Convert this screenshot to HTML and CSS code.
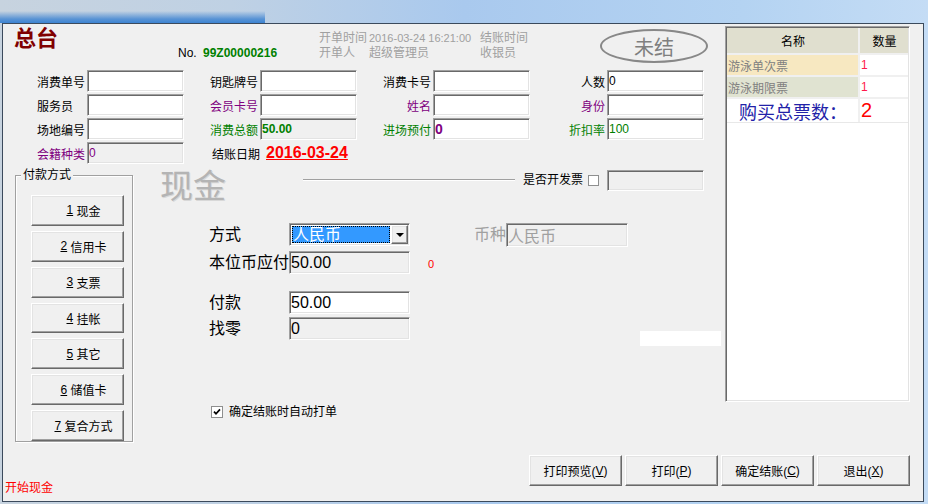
FILE: index.html
```html
<!DOCTYPE html>
<html lang="zh-CN">
<head>
  <meta charset="UTF-8">
  <title>总台 - 结账</title>
  <link rel="stylesheet" href="styles.css">
</head>
<body>
  <div class="desk">
    <div class="window">
      <div class="top">
        <div class="main">
          <div class="head">
            <div class="title">总台</div>
            <div class="no">No. <b>99Z00000216</b></div>
            <div class="info">
              <span>开单时间</span><span class="time">2016-03-24 16:21:00</span><span>结账时间</span>
              <span>开单人</span><span>超级管理员</span><span>收银员</span>
            </div>
            <div class="stamp">未结</div>
          </div>

          <div class="fields">
            <div class="lbl l">消费单号</div><div class="box"></div>
            <div class="lbl">钥匙牌号</div><div class="box"></div>
            <div class="lbl">消费卡号</div><div class="box"></div>
            <div class="lbl">人数</div><div class="box">0</div>

            <div class="lbl l">服务员</div><div class="box"></div>
            <div class="lbl purple">会员卡号</div><div class="box"></div>
            <div class="lbl purple">姓名</div><div class="box"></div>
            <div class="lbl purple">身份</div><div class="box"></div>

            <div class="lbl l">场地编号</div><div class="box"></div>
            <div class="lbl green">消费总额</div><div class="box off green strong">50.00</div>
            <div class="lbl green">进场预付</div><div class="box purple strong big-val">0</div>
            <div class="lbl green">折扣率</div><div class="box green">100</div>

            <div class="lbl l purple">会籍种类</div><div class="box off purple">0</div>
            <div class="lbl tight">结账日期</div><div class="date">2016-03-24</div>
          </div>

          <div class="pay">
            <div class="group">
              <span class="caption">付款方式</span>
              <div class="btn raised"><u>1</u>&nbsp;现金</div>
              <div class="btn raised"><u>2</u>&nbsp;信用卡</div>
              <div class="btn raised"><u>3</u>&nbsp;支票</div>
              <div class="btn raised"><u>4</u>&nbsp;挂帐</div>
              <div class="btn raised"><u>5</u>&nbsp;其它</div>
              <div class="btn raised"><u>6</u>&nbsp;储值卡</div>
              <div class="btn raised"><u>7</u>&nbsp;复合方式</div>
            </div>

            <div class="cash">
              <div class="cash-head">
                <div class="big">现金</div>
                <div class="rule"></div>
                <div class="q">是否开发票</div>
                <div class="chk"></div>
                <div class="box off inv"></div>
              </div>

              <div class="rows">
                <div class="row">
                  <div class="name">方式</div>
                  <div class="select">
                    <div class="sel-val">人民币</div>
                    <div class="drop raised"></div>
                  </div>
                  <div class="cur">币种</div>
                  <div class="box off cur-val">人民币</div>
                </div>
                <div class="row r2">
                  <div class="name">本位币应付</div>
                  <div class="box off">50.00</div>
                  <div class="diff">0</div>
                </div>
                <div class="row r3">
                  <div class="name">付款</div>
                  <div class="box">50.00</div>
                </div>
                <div class="row r4">
                  <div class="name">找零</div>
                  <div class="box off">0</div>
                  <div class="blank"></div>
                </div>
              </div>

              <div class="auto">
                <div class="chk on">
                  <svg width="8" height="8" viewBox="0 0 8 8"><path d="M1 3.6 L3 5.8 L7 1.4" stroke="#000" stroke-width="1.7" fill="none"/></svg>
                </div>
                <span>确定结账时自动打单</span>
              </div>
            </div>
          </div>
        </div>

        <div class="side">
          <div class="tr th"><div>名称</div><div>数量</div></div>
          <div class="tr t1"><div>游泳单次票</div><div>1</div></div>
          <div class="tr t2"><div>游泳期限票</div><div>1</div></div>
          <div class="tr sum"><div>购买总票数：</div><div>2</div></div>
        </div>
      </div>

      <div class="foot">
        <div class="status">开始现金</div>
        <div class="actions">
          <div class="btn raised">打印预览(<u>V</u>)</div>
          <div class="btn raised">打印(<u>P</u>)</div>
          <div class="btn raised">确定结账(<u>C</u>)</div>
          <div class="btn raised">退出(<u>X</u>)</div>
        </div>
      </div>
    </div>
  </div>
</body>
</html>
```

FILE: styles.css
```css
* {
  box-sizing: border-box;
}
body {
  margin: 0;
  width: 928px;
  height: 504px;
  overflow: hidden;
  font: 12px "Liberation Sans", "Noto Sans CJK SC", sans-serif;
  color: #000;
  background-color: #b5cfe9;
  background-image:
    linear-gradient(180deg, rgba(70, 136, 210, 0) 11px, rgba(70, 136, 210, .85) 19px, #3d84d2 23px),
    linear-gradient(90deg, #c7d3df 0, #bfd1e4 25%, #a9c9ee 50%, #b4d3f2 80%, #c4dcf5 100%);
  background-size: 265px 23px, 100% 100%;
  background-repeat: no-repeat;
}
.desk {
  padding: 23px 0 0 2px;
}
.window {
  width: 922px;
  height: 479px;
  border: 1px solid #3b4a5c;
  background: #f0f0f0;
  display: flex;
  flex-direction: column;
}

/* 3D borders */
.raised {
  background: #f0f0f0;
  border: 1px solid;
  border-color: #fff #696969 #696969 #fff;
  box-shadow: inset -1px -1px 0 #a0a0a0, inset 1px 1px 0 #e3e3e3;
}
.box {
  display: flex;
  align-items: center;
  padding: 0 1px;
  background: #fff;
  border: 1px solid;
  border-color: #a0a0a0 #fff #fff #a0a0a0;
  box-shadow: inset 1px 1px 0 #696969, inset -1px -1px 0 #e3e3e3;
  white-space: nowrap;
  overflow: hidden;
}
.box.off {
  background: #f0f0f0;
}

.top {
  display: flex;
  height: 425px;
}
.main {
  width: 722px;
  flex: none;
}

/* header */
.head {
  display: flex;
  align-items: flex-start;
  height: 46px;
}
.title {
  width: 164px;
  margin: 2px 0 0 11px;
  font-size: 22px;
  line-height: 26px;
  font-weight: bold;
  color: #800000;
}
.no {
  width: 141px;
  margin-top: 22px;
  line-height: 15px;
}
.no b {
  color: #008000;
  margin-left: 3px;
}
.info {
  width: 281px;
  margin-top: 7px;
  display: grid;
  grid-template-columns: 50px 111px auto;
  line-height: 15px;
  color: #a0a0a0;
}
.info .time {
  font-size: 11px;
}
.stamp {
  width: 108px;
  height: 34px;
  margin-top: 5px;
  border: 2px solid #888;
  border-radius: 50%;
  display: flex;
  align-items: center;
  justify-content: center;
  font-size: 20px;
  color: #7f7f7f;
}

/* field grid */
.fields {
  display: grid;
  grid-template-columns: 50px 97px 76px 97px 76px 97px 77px 97px;
  grid-auto-rows: 22px;
  row-gap: 2px;
  margin-left: 34px;
}
.lbl {
  display: flex;
  align-items: center;
  justify-content: flex-end;
  padding-right: 2px;
  white-space: nowrap;
}
.lbl.l {
  justify-content: flex-start;
}
.lbl.tight {
  padding-right: 0;
}
.purple {
  color: #800080;
}
.green {
  color: #008000;
}
.strong {
  font-weight: bold;
}
.big-val {
  font-size: 14px;
}
.date {
  grid-column: 4 / span 3;
  display: flex;
  align-items: center;
  padding-left: 6px;
  font-size: 16px;
  font-weight: bold;
  color: #ff0000;
  text-decoration: underline;
}

/* payment */
.pay {
  display: flex;
  align-items: flex-start;
}
.group {
  position: relative;
  width: 118px;
  height: 267px;
  margin: 11px 0 0 12px;
  padding: 19px 0 0 15px;
  border: 1px solid #a0a0a0;
  box-shadow: inset 1px 1px 0 #fff, 1px 1px 0 #fff;
  display: flex;
  flex-direction: column;
  gap: 5px;
}
.caption {
  position: absolute;
  top: -7px;
  left: 5px;
  padding: 0 2px;
  line-height: 13px;
  background: #f0f0f0;
}
.btn {
  width: 93px;
  height: 31px;
  display: flex;
  align-items: center;
  justify-content: center;
  white-space: nowrap;
}
.group .btn {
  padding-left: 12px;
}

.cash {
  flex: 1;
  margin: 6px 0 0 27px;
}
.cash-head {
  display: flex;
  align-items: flex-start;
  height: 34px;
}
.big {
  width: 143px;
  font-size: 33px;
  line-height: 34px;
  color: #b4b4b4;
  text-shadow: 1px 1px 0 #d8d8d8;
}
.rule {
  width: 212px;
  margin: 9px 8px 0 0;
  border-top: 1px solid #a0a0a0;
  border-bottom: 1px solid #fff;
}
.q {
  width: 60px;
  line-height: 20px;
  white-space: nowrap;
}
.chk {
  width: 11px;
  height: 11px;
  margin: 5px 8px 0 5px;
  border: 1px solid #8e8f8f;
  background: #fff;
}
.inv {
  width: 97px;
  height: 21px;
}

.rows {
  margin: 19px 0 0 49px;
}
.row {
  display: flex;
  align-items: flex-start;
  font-size: 16px;
}
.row.r2 {
  margin-top: 4px;
}
.row.r3 {
  margin-top: 15px;
}
.row.r4 {
  margin-top: 3px;
}
.row .name {
  width: 80px;
  line-height: 23px;
  white-space: nowrap;
}
.row .box {
  width: 121px;
  height: 23px;
}
.select {
  width: 121px;
  height: 23px;
  display: flex;
  padding: 1px;
  background: #fff;
  border: 1px solid;
  border-color: #a0a0a0 #fff #fff #a0a0a0;
  box-shadow: inset 1px 1px 0 #696969, inset -1px -1px 0 #e3e3e3;
}
.sel-val {
  flex: 1;
  margin: 1px;
  padding-left: 1px;
  line-height: 17px;
  background: #3399ff;
  color: #fff;
  outline: 1px dotted #000;
  outline-offset: -1px;
}
.drop {
  width: 17px;
  display: flex;
  align-items: center;
  justify-content: center;
}
.drop::after {
  content: "";
  border: 4px solid transparent;
  border-top: 4px solid #000;
  border-bottom: 0;
  margin-top: 1px;
}
.cur {
  width: 32px;
  margin-left: 64px;
  line-height: 23px;
  color: #a0a0a0;
}
.row .cur-val {
  width: 122px;
  height: 24px;
  color: #a0a0a0;
}
.diff {
  margin-left: 18px;
  padding-top: 2px;
  line-height: 23px;
  font-size: 11px;
  color: #ff0000;
}
.blank {
  width: 81px;
  height: 15px;
  margin: 14px 0 0 230px;
  background: #fff;
}
.auto {
  display: flex;
  align-items: center;
  margin: 59px 0 0 51px;
  line-height: 14px;
}
.auto .chk {
  width: 12px;
  height: 12px;
  margin: 0 6px 0 0;
  display: flex;
  align-items: center;
  justify-content: center;
}

/* ticket list */
.side {
  width: 185px;
  height: 376px;
  margin-top: 2px;
  padding: 1px;
  background: #fff;
  border: 1px solid;
  border-color: #a0a0a0 #fff #fff #a0a0a0;
  box-shadow: inset 1px 1px 0 #696969, inset -1px -1px 0 #e3e3e3;
}
.tr {
  display: flex;
  height: 22px;
  border-bottom: 2px solid #f0f0f0;
}
.tr > div {
  display: flex;
  align-items: center;
  white-space: nowrap;
}
.tr > div:first-child {
  width: 133px;
  padding-left: 1px;
  border-right: 2px solid #f0f0f0;
}
.tr > div:last-child {
  flex: 1;
  padding-left: 1px;
  color: #ff1a4a;
}
.th {
  height: 27px;
  background: #e0dfcf;
}
.th > div {
  justify-content: center;
}
.tr.th > div:last-child {
  color: #000;
}
.t1 > div:first-child {
  background: #f7e8c1;
  color: #808080;
}
.t2 > div:first-child {
  background: #e0e3d1;
  color: #808080;
}
.sum {
  height: 24px;
  border-bottom: 1px solid #e8e8e8;
}
.sum > div:first-child {
  justify-content: center;
  font-size: 18px;
  color: #2222a8;
}
.sum > div:last-child {
  font-size: 20px;
  color: #ff0000;
}

/* bottom bar */
.foot {
  flex: 1;
  display: flex;
  align-items: flex-start;
  padding-top: 6px;
}
.status {
  margin: 25px 0 0 2px;
  line-height: 16px;
  color: #ff0000;
}
.actions {
  display: flex;
  gap: 3px;
  margin: 0 13px 0 auto;
}
```
